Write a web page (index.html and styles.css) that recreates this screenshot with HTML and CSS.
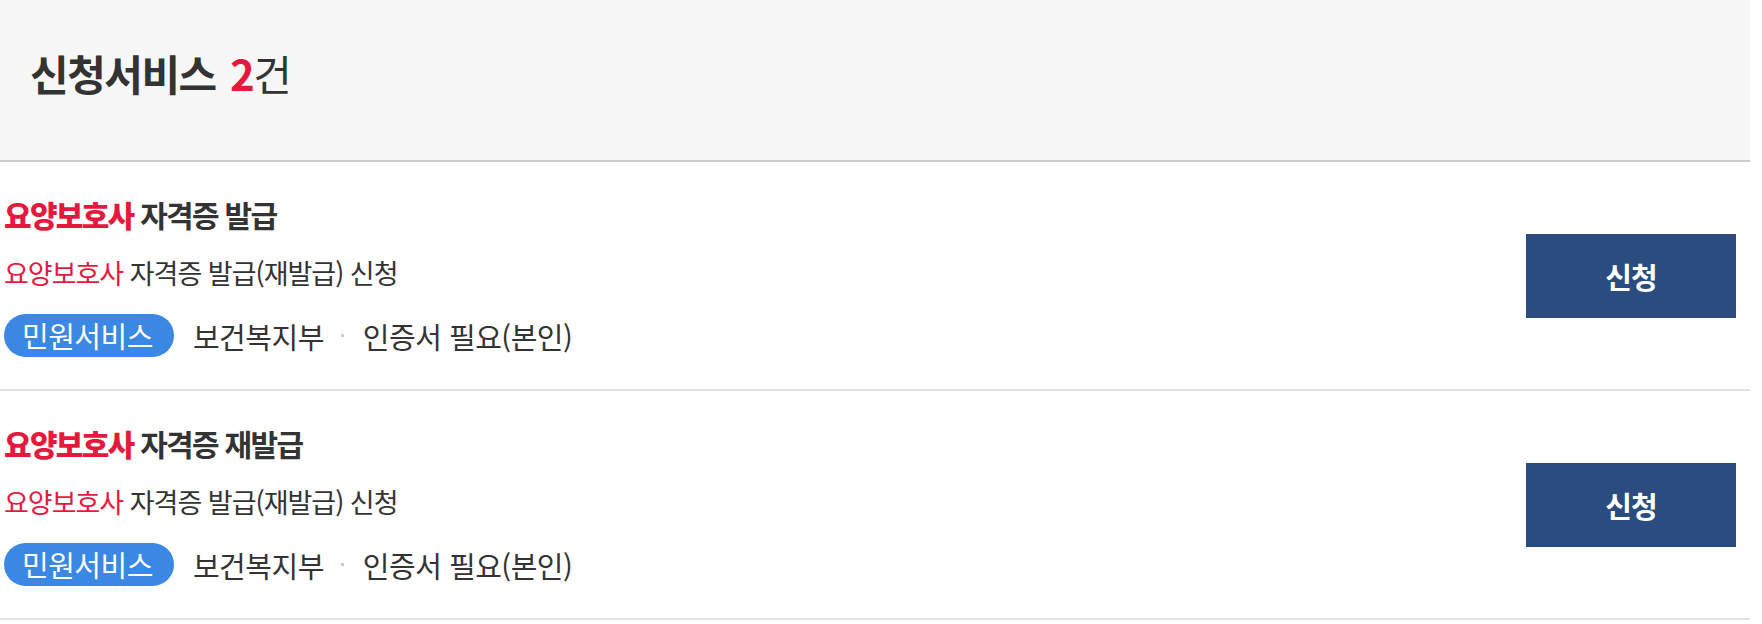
FILE: index.html
```html
<html lang="ko">
<head>
    <meta charset="UTF-8">
    <meta name="viewport" content="width=device-width, initial-scale=1.0">
    <title>신청서비스</title>
    <link rel="stylesheet" href="styles.css">
</head>
<body>
    <div class="wrap">
        <div class="result-head">
            <h2>신청서비스 <em>2</em><span>건</span></h2>
        </div>

        <ul class="service-list">
            <li class="service-item">
                <div class="service-info">
                    <p class="service-title"><strong>요양보호사</strong> 자격증 발급</p>
                    <p class="service-desc"><strong>요양보호사</strong> 자격증 발급(재발급) 신청</p>
                    <div class="service-meta">
                        <span class="badge">민원서비스</span>
                        <span class="org">보건복지부</span>
                        <span class="dot"></span>
                        <span class="cert">인증서 필요(본인)</span>
                    </div>
                </div>
                <a href="#" class="btn-apply">신청</a>
            </li>
            <li class="service-item">
                <div class="service-info">
                    <p class="service-title"><strong>요양보호사</strong> 자격증 재발급</p>
                    <p class="service-desc"><strong>요양보호사</strong> 자격증 발급(재발급) 신청</p>
                    <div class="service-meta">
                        <span class="badge">민원서비스</span>
                        <span class="org">보건복지부</span>
                        <span class="dot"></span>
                        <span class="cert">인증서 필요(본인)</span>
                    </div>
                </div>
                <a href="#" class="btn-apply">신청</a>
            </li>
        </ul>
    </div>
</body>
</html>
```

FILE: styles.css
```css
* {
    margin: 0;
    padding: 0;
    box-sizing: border-box;
}

body {
    background-color: #fff;
    color: #333;
    font-family: 'Noto Sans CJK KR', 'Noto Sans', sans-serif;
}

.wrap {
    width: 1750px;
}

.result-head {
    height: 162px;
    background-color: #f7f7f7;
    border-bottom: 2px solid #ccc;
    padding: 0 30px 16px;
    display: flex;
    align-items: center;
}

.result-head h2 {
    font-size: 42px;
    font-weight: 700;
    letter-spacing: -1.5px;
    color: #333;
}

.result-head em {
    font-style: normal;
    color: #e5193d;
    margin-left: 4px;
}

.result-head span {
    font-weight: 400;
}

.service-list {
    list-style: none;
}

.service-item {
    display: flex;
    align-items: center;
    justify-content: space-between;
    border-bottom: 2px solid #e2e2e2;
    padding: 32px 14px 32px 4px;
}

.service-info {
    display: flex;
    flex-direction: column;
}

.service-title {
    font-size: 30px;
    font-weight: 700;
    line-height: 40px;
    letter-spacing: -1.7px;
    color: #333;
}

.service-title strong,
.service-desc strong {
    color: #e5193d;
}

.service-desc {
    margin-top: 19px;
    font-size: 27px;
    line-height: 40px;
    letter-spacing: -1px;
    color: #333;
}

.service-desc strong {
    font-weight: 400;
}

.service-meta {
    margin-top: 21px;
    display: flex;
    align-items: center;
    font-size: 29px;
    letter-spacing: -0.5px;
    color: #333;
}

.badge {
    display: inline-block;
    height: 43px;
    line-height: 43px;
    padding: 0 21px 0 18px;
    border-radius: 22px;
    background-color: #3a87e4;
    color: #fff;
    font-size: 29px;
    letter-spacing: -0.5px;
}

.org {
    margin-left: 19px;
}

.dot {
    width: 3px;
    height: 3px;
    background-color: #ccc;
    margin: 0 19px 0 17px;
}

.btn-apply {
    width: 210px;
    height: 84px;
    display: flex;
    align-items: center;
    justify-content: center;
    background-color: #2b4c7e;
    color: #fff;
    font-size: 29px;
    font-weight: 700;
    text-decoration: none;
    letter-spacing: -1px;
}
```
